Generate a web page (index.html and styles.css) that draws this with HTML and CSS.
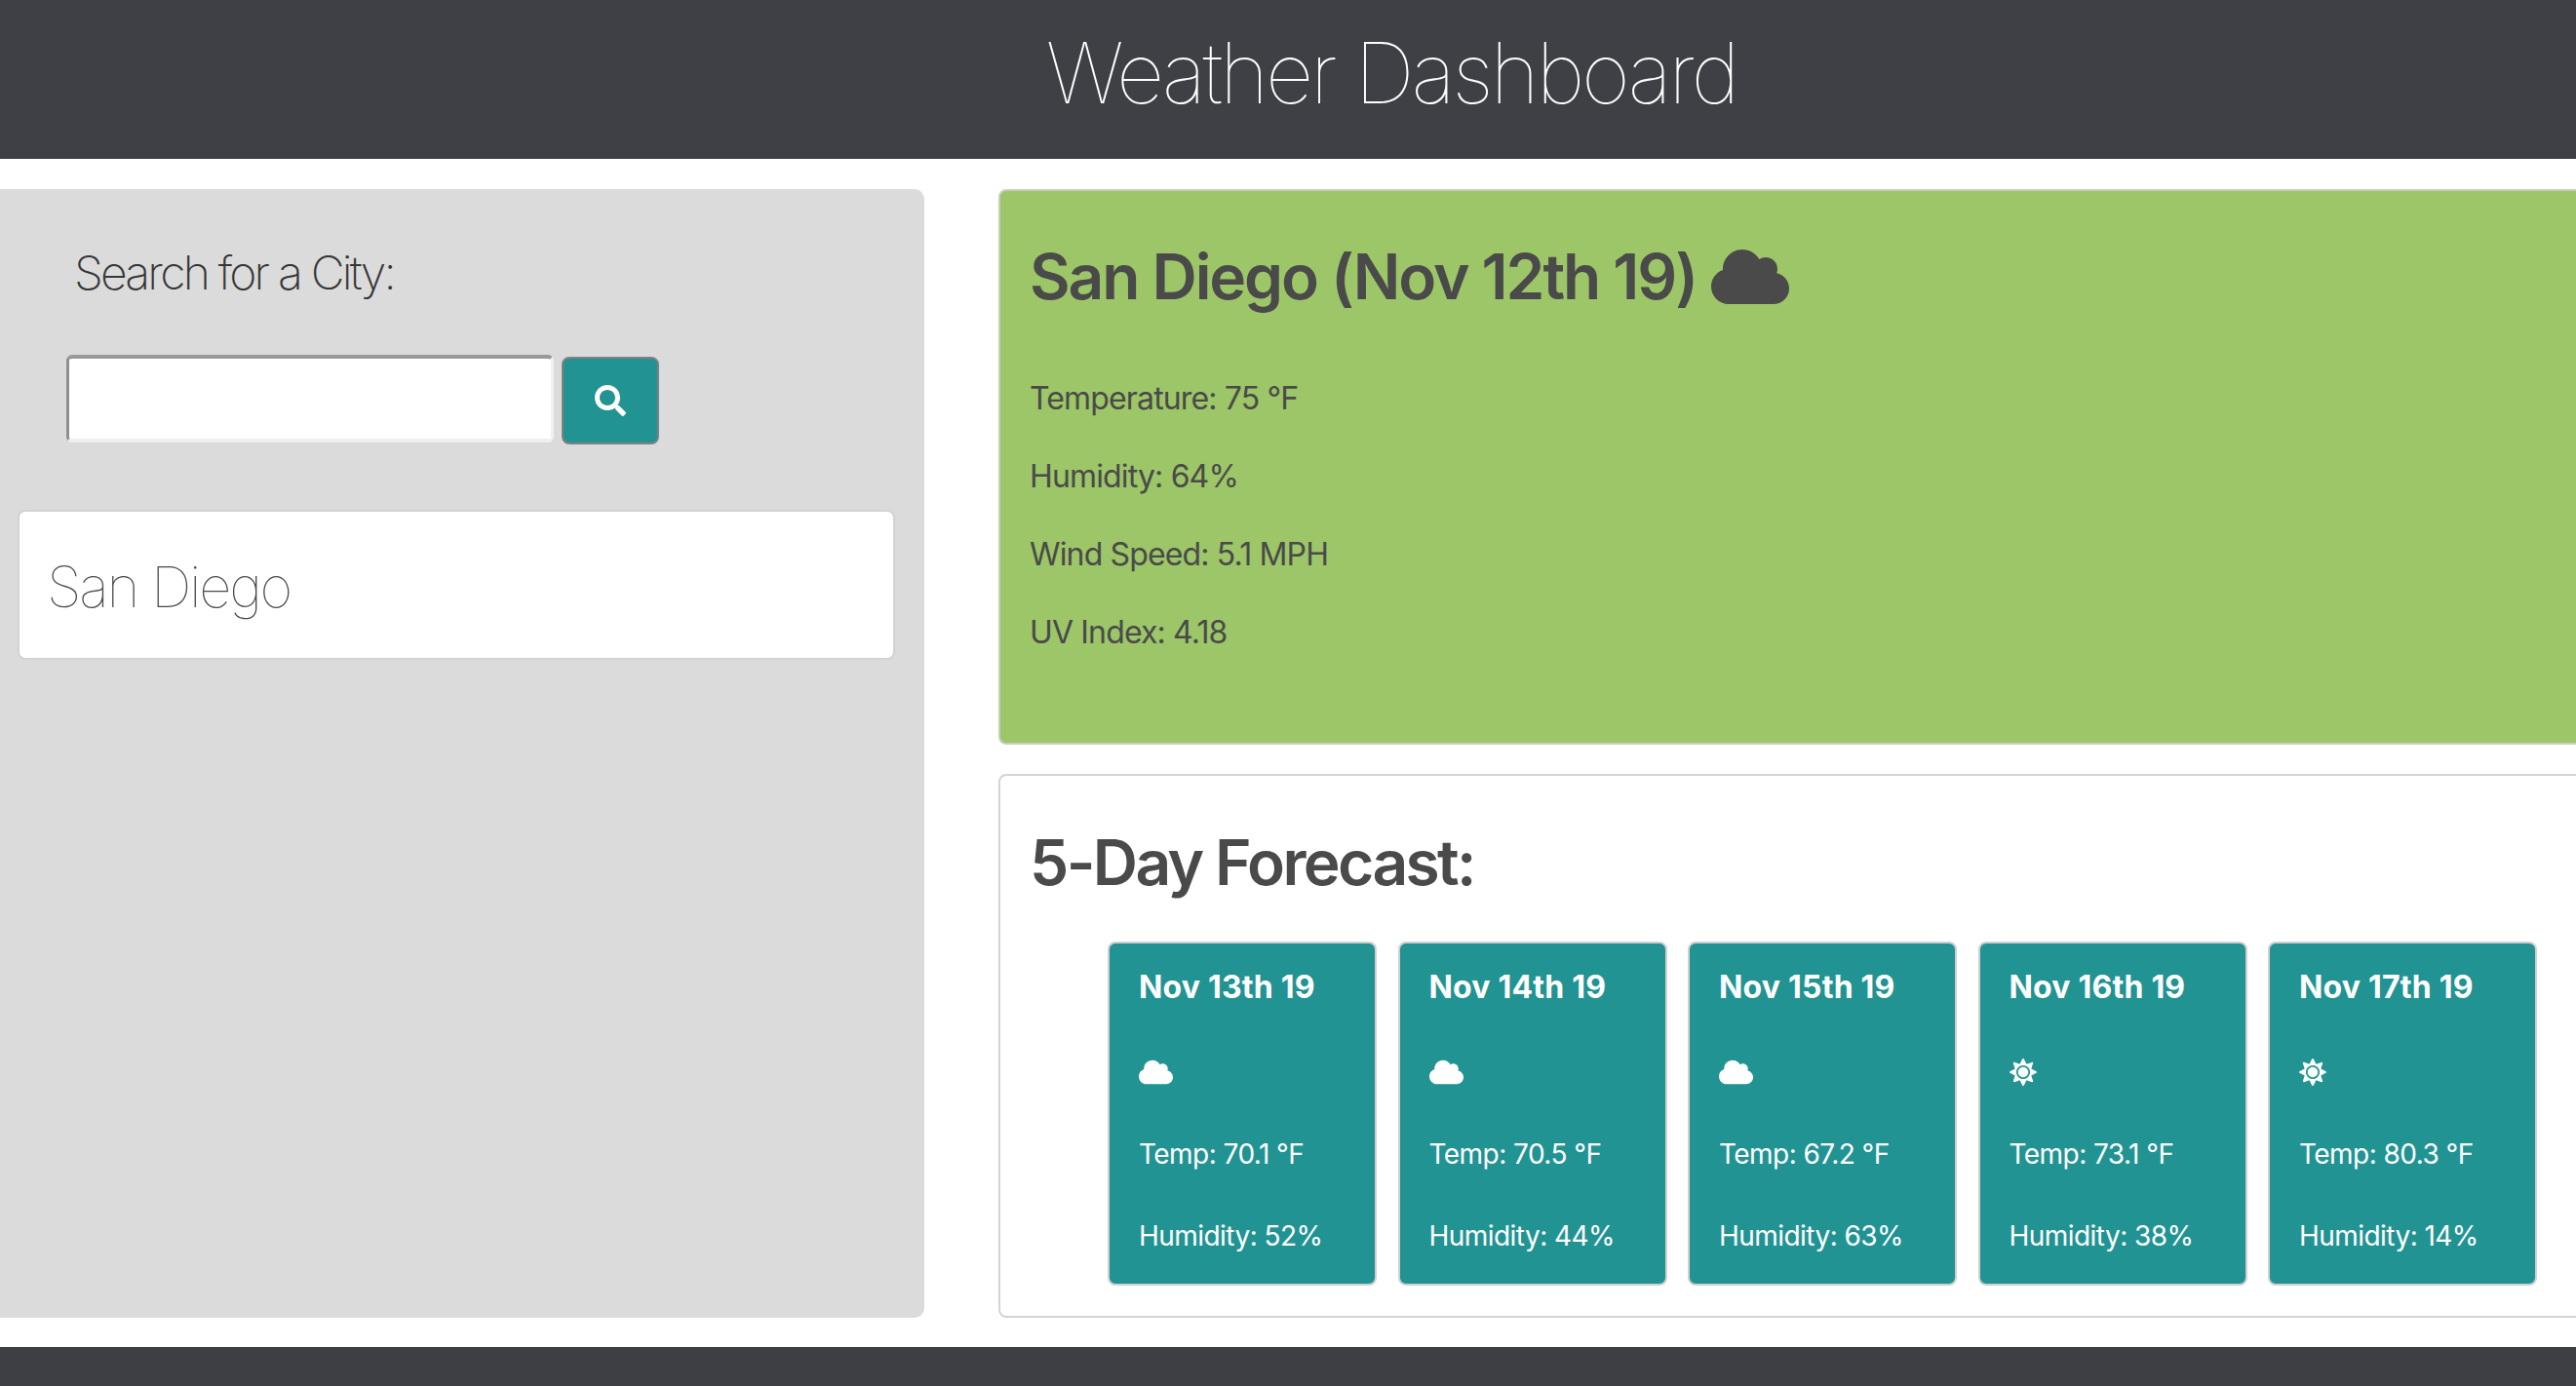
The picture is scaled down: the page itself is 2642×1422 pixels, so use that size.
FILE: index.html
```html
<!DOCTYPE html>
<html>
<head>
    <title>Weather Dashboard</title>
    <link rel="stylesheet" href="styles.css">
</head>
<body>
    <svg class="icon-defs">
        <symbol id="icon-cloud" viewBox="0 0 640 512"><path d="M537.6 226.6c4.1-10.7 6.4-22.4 6.4-34.6 0-53-43-96-96-96-19.7 0-38.1 6-53.3 16.2C367 64.2 315.3 32 256 32c-88.4 0-160 71.6-160 160 0 2.7.1 5.4.2 8.1C40.2 219.8 0 273.2 0 336c0 79.5 64.5 144 144 144h368c70.7 0 128-57.3 128-128 0-61.9-44-113.6-102.4-125.4z"/></symbol>
        <symbol id="icon-sun" viewBox="0 0 512 512"><path d="M256 160c-52.9 0-96 43.1-96 96s43.1 96 96 96 96-43.1 96-96-43.1-96-96-96zm246.4 80.5l-94.7-47.3 33.5-100.4c4.5-13.6-8.4-26.5-21.9-21.9l-100.4 33.5-47.4-94.8c-6.4-12.8-24.6-12.8-31 0l-47.3 94.7L92.7 70.8c-13.6-4.5-26.5 8.4-21.9 21.9l33.5 100.4-94.7 47.4c-12.8 6.4-12.8 24.6 0 31l94.7 47.3-33.5 100.5c-4.5 13.6 8.4 26.5 21.9 21.9l100.4-33.5 47.3 94.7c6.4 12.8 24.6 12.8 31 0l47.3-94.7 100.4 33.5c13.6 4.5 26.5-8.4 21.9-21.9l-33.5-100.4 94.7-47.3c13-6.5 13-24.7.2-31.1zm-155.9 106c-49.9 49.9-131.1 49.9-181 0-49.9-49.9-49.9-131.1 0-181 49.9-49.9 131.1-49.9 181 0 49.9 49.9 49.9 131.1 0 181z"/></symbol>
        <symbol id="icon-search" viewBox="0 0 512 512"><path d="M505 442.7L405.3 343c-4.5-4.5-10.6-7-17-7H372c27.6-35.3 44-79.7 44-128C416 93.1 322.9 0 208 0S0 93.1 0 208s93.1 208 208 208c48.3 0 92.7-16.4 128-44v16.3c0 6.4 2.5 12.5 7 17l99.7 99.7c9.4 9.4 24.6 9.4 33.9 0l28.3-28.3c9.4-9.4 9.4-24.6.1-34zM208 336c-70.7 0-128-57.2-128-128 0-70.7 57.2-128 128-128 70.7 0 128 57.2 128 128 0 70.7-57.2 128-128 128z"/></symbol>
    </svg>

    <header class="site-header">
        <h1 class="site-title">Weather Dashboard</h1>
    </header>

    <main class="layout">
        <aside class="sidebar">
            <label class="search-label" for="cityInput">Search for a City:</label>
            <div class="search-row">
                <input class="search-input" type="text" id="cityInput">
                <button class="search-button"><svg class="icon-search"><use href="#icon-search"></use></svg></button>
            </div>
            <div class="city-card">San Diego</div>
        </aside>

        <section class="content">
            <div class="current">
                <h2 class="current-title">San Diego (Nov 12th 19) <svg class="icon-current"><use href="#icon-cloud"></use></svg></h2>
                <p class="current-line">Temperature: 75 °F</p>
                <p class="current-line">Humidity: 64%</p>
                <p class="current-line">Wind Speed: 5.1 MPH</p>
                <p class="current-line">UV Index: 4.18</p>
            </div>

            <div class="forecast">
                <h2 class="forecast-title">5-Day Forecast:</h2>
                <div class="forecast-row">
                    <div class="day-card">
                        <p class="day-date">Nov 13th 19</p>
                        <div class="day-icon"><svg class="icon-cloud"><use href="#icon-cloud"></use></svg></div>
                        <p class="day-line">Temp: 70.1 °F</p>
                        <p class="day-line">Humidity: 52%</p>
                    </div>
                    <div class="day-card">
                        <p class="day-date">Nov 14th 19</p>
                        <div class="day-icon"><svg class="icon-cloud"><use href="#icon-cloud"></use></svg></div>
                        <p class="day-line">Temp: 70.5 °F</p>
                        <p class="day-line">Humidity: 44%</p>
                    </div>
                    <div class="day-card">
                        <p class="day-date">Nov 15th 19</p>
                        <div class="day-icon"><svg class="icon-cloud"><use href="#icon-cloud"></use></svg></div>
                        <p class="day-line">Temp: 67.2 °F</p>
                        <p class="day-line">Humidity: 63%</p>
                    </div>
                    <div class="day-card">
                        <p class="day-date">Nov 16th 19</p>
                        <div class="day-icon"><svg class="icon-sun"><use href="#icon-sun"></use></svg></div>
                        <p class="day-line">Temp: 73.1 °F</p>
                        <p class="day-line">Humidity: 38%</p>
                    </div>
                    <div class="day-card">
                        <p class="day-date">Nov 17th 19</p>
                        <div class="day-icon"><svg class="icon-sun"><use href="#icon-sun"></use></svg></div>
                        <p class="day-line">Temp: 80.3 °F</p>
                        <p class="day-line">Humidity: 14%</p>
                    </div>
                </div>
            </div>
        </section>
    </main>

    <footer class="site-footer"></footer>
</body>
</html>
```

FILE: styles.css
```css
html, body {
    margin: 0;
    overflow: hidden;
}
body {
    height: 1422px;
    background: #fff;
    color: #4a4a4a;
    font-family: Inter, "Noto Sans", sans-serif;
}
p, h1, h2 {
    margin: 0;
}
.icon-defs {
    display: none;
}
/* the page is wider than the window, so the header centres past the middle */
.site-header {
    width: 2854px;
    height: 163px;
    background: #3f4046;
    display: flex;
    justify-content: center;
    padding-top: 17px;
    box-sizing: border-box;
}
.site-title {
    font-size: 86px;
    line-height: 116px;
    font-weight: 100;
    letter-spacing: -3.3px;
    color: #fff;
}
.layout {
    display: grid;
    grid-template-columns: 948px 1830px;
    column-gap: 76px;
    padding-top: 30px;
    height: 1159px;
}
.sidebar {
    background: #dbdbdb;
    border-radius: 0 10px 10px 0;
    padding-top: 56px;
    box-sizing: border-box;
    margin-top: 1px;
}
.search-label {
    display: block;
    margin-left: 76px;
    font-size: 48px;
    line-height: 60px;
    font-weight: 200;
    letter-spacing: -2.8px;
    color: #363636;
}
.search-row {
    display: flex;
    align-items: flex-start;
    gap: 8px;
    margin: 54px 0 67px 68px;
}
.search-input {
    width: 500px;
    height: 90px;
    box-sizing: border-box;
    background: #fff;
    border-style: solid;
    border-width: 4px 3px 4px 3px;
    border-color: #999 #efefef #efefef #8f8f8f;
    border-radius: 6px;
    padding: 0;
}
.search-button {
    width: 100px;
    height: 90px;
    margin-top: 2px;
    box-sizing: border-box;
    background: #219393;
    border: 2px solid #808080;
    border-radius: 8px;
    display: flex;
    align-items: center;
    justify-content: center;
    padding: 0;
}
.icon-search {
    width: 32px;
    height: 32px;
    fill: #fff;
}
.city-card {
    margin: 0 30px 0 18px;
    height: 154px;
    box-sizing: border-box;
    background: #fff;
    border: 2px solid #d2d2d2;
    border-radius: 8px;
    padding-left: 28px;
    font-size: 58px;
    line-height: 154px;
    font-weight: 100;
    letter-spacing: -2.3px;
    color: #4a4a4a;
}
.content {
    display: flex;
    flex-direction: column;
    gap: 30px;
    margin-top: 1px;
}
.current {
    height: 570px;
    box-sizing: border-box;
    background: #9cc667;
    border: 2px solid #c8cfc0;
    border-radius: 8px;
    padding: 48px 30px 0;
}
.current-title {
    font-size: 64px;
    line-height: 80px;
    font-weight: 600;
    letter-spacing: -2.05px;
    margin-bottom: 61px;
    display: flex;
    align-items: center;
    gap: 15px;
}
.icon-current {
    width: 80px;
    height: 64px;
    fill: #4a4a4a;
}
.current-line {
    font-size: 32px;
    line-height: 48px;
    letter-spacing: -0.85px;
    margin-bottom: 32px;
}
.forecast {
    flex: 1;
    box-sizing: border-box;
    background: #fff;
    border: 2px solid #d4d4d4;
    border-radius: 8px;
    padding: 49px 30px 30px;
}
.forecast-title {
    font-size: 64px;
    line-height: 80px;
    font-weight: 600;
    letter-spacing: -2.6px;
    margin-bottom: 41px;
}
.forecast-row {
    display: flex;
    gap: 21.5px;
    margin-left: 80px;
}
.day-card {
    width: 276px;
    height: 353px;
    box-sizing: border-box;
    background: #219393;
    border: 2px solid #d0d0d0;
    border-radius: 8px;
    padding: 20px 0 0 30px;
    color: #fff;
    display: flex;
    flex-direction: column;
    gap: 42px;
}
.day-date {
    font-size: 32px;
    line-height: 50px;
    font-weight: 700;
    letter-spacing: 0.2px;
}
.day-icon {
    height: 39px;
    margin-bottom: 2px;
    display: flex;
    align-items: center;
}
.icon-cloud {
    width: 35px;
    height: 28px;
    fill: #fff;
}
.icon-sun {
    width: 28px;
    height: 28px;
    fill: #fff;
}
.day-line {
    font-size: 28px;
    line-height: 42px;
    letter-spacing: -0.55px;
}
.site-footer {
    height: 40px;
    margin-top: 30px;
    background: #3e3f44;
}
```
